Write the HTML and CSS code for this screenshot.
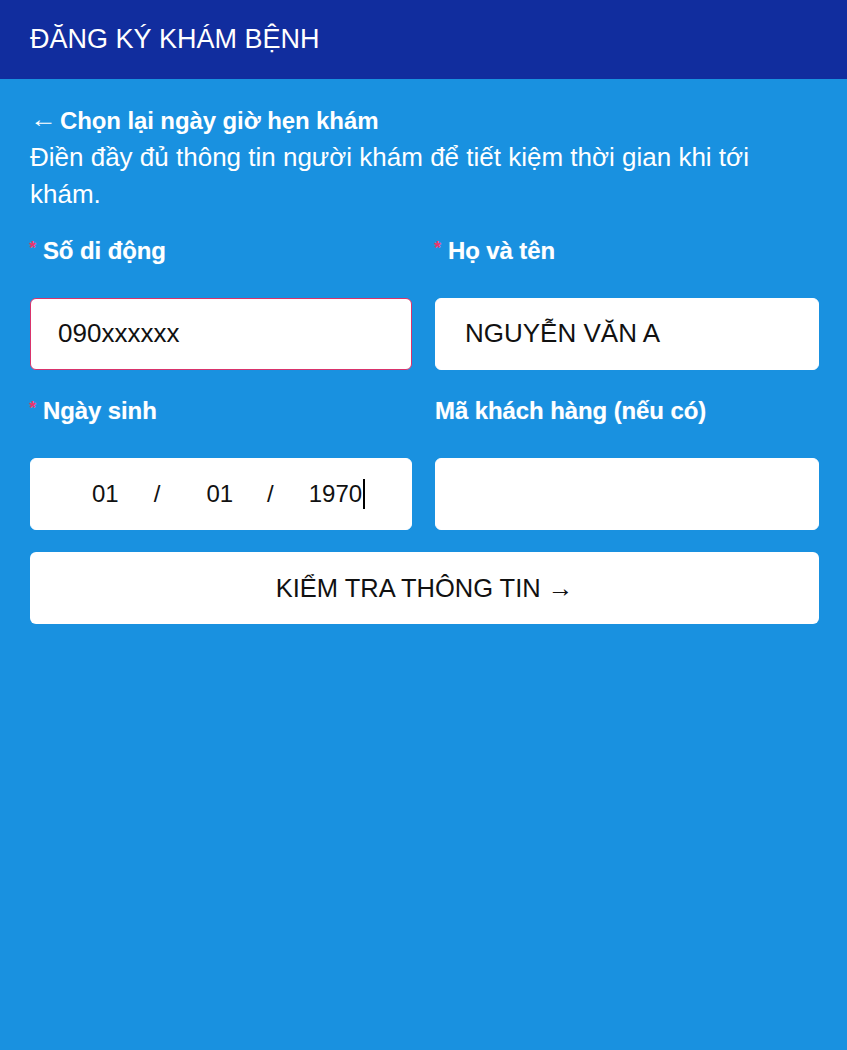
FILE: index.html
```html
<!DOCTYPE html>
<html lang="vi">
<head>
<meta charset="utf-8">
<title>Đăng ký khám bệnh</title>
<link rel="stylesheet" href="styles.css">
</head>
<body>
<header class="topbar">ĐĂNG KÝ KHÁM BỆNH</header>
<main class="content">
  <a class="back-link" href="#"><span class="back-arrow">←</span>Chọn lại ngày giờ hẹn khám</a>
  <p class="intro">Điền đầy đủ thông tin người khám để tiết kiệm thời gian khi tới khám.</p>
  <form class="form-grid">
    <div class="field">
      <label class="field-label"><span class="req">*</span>Số di động</label>
      <div class="box box-error">090xxxxxx</div>
    </div>
    <div class="field">
      <label class="field-label"><span class="req">*</span>Họ và tên</label>
      <div class="box box-name">NGUYỄN VĂN A</div>
    </div>
    <div class="field">
      <label class="field-label"><span class="req">*</span>Ngày sinh</label>
      <div class="box box-date">
        <span class="d-part">01</span><span class="d-sep sep-1">/</span><span class="d-part part-2">01</span><span class="d-sep sep-2">/</span><span class="d-year">1970</span><span class="caret"></span>
      </div>
    </div>
    <div class="field">
      <label class="field-label">Mã khách hàng (nếu có)</label>
      <div class="box"></div>
    </div>
    <button type="button" class="submit">KIỂM TRA THÔNG TIN →</button>
  </form>
</main>
</body>
</html>
```
FILE: styles.css
```css
html, body {
  margin: 0;
  padding: 0;
}
body {
  background: #1991e0;
  font-family: "Liberation Sans", Arial, sans-serif;
  color: #ffffff;
  min-height: 1050px;
}
.topbar {
  background: #112d9e;
  height: 79px;
  line-height: 78px;
  padding-left: 30px;
  font-size: 27px;
  color: #ffffff;
}
.content {
  padding: 23px 28px 0 30px;
}
.back-link {
  display: block;
  color: #ffffff;
  text-decoration: none;
  font-weight: bold;
  font-size: 24px;
  line-height: 37px;
  letter-spacing: -0.1px;
}
.back-arrow {
  display: inline-block;
  font-weight: normal;
  margin-right: 6px;
  transform: scaleX(1.12) translateY(-2px);
  transform-origin: left center;
}
.intro {
  margin: 0;
  font-size: 26px;
  line-height: 37px;
}
.form-grid {
  margin-top: 19px;
  display: grid;
  grid-template-columns: 382px 1fr;
  column-gap: 23px;
  row-gap: 22.5px;
}
.field {
  display: flex;
  flex-direction: column;
}
.field-label {
  font-weight: bold;
  font-size: 24px;
  line-height: 37px;
  height: 37px;
  margin-bottom: 28.5px;
  letter-spacing: -0.1px;
  text-shadow: 0 0 1px rgba(255,255,255,0.4);
}
.req {
  color: #e8336d;
  font-size: 18px;
  line-height: 0;
  vertical-align: 5px;
  font-weight: bold;
  margin-left: -1px;
  margin-right: 7px;
}
.box {
  height: 72px;
  box-sizing: border-box;
  background: #ffffff;
  border: 1px solid #ffffff;
  border-radius: 6px;
  padding-left: 27px;
  display: flex;
  align-items: center;
  font-size: 26px;
  color: #111111;
}
.box-name {
  padding-left: 29px;
}
.box-error {
  border: 1.5px solid #d9336b;
}
.box-date {
  padding-left: 61px;
  font-size: 24px;
}
.sep-1 {
  margin: 0 46px 0 35px;
}
.sep-2 {
  margin: 0 35px 0 34px;
}
.caret {
  display: inline-block;
  width: 2px;
  height: 30px;
  background: #000000;
  margin-left: 1px;
}
.submit {
  grid-column: 1 / span 2;
  height: 72px;
  background: #ffffff;
  border: none;
  border-radius: 6px;
  font-family: "Liberation Sans", Arial, sans-serif;
  font-size: 25.5px;
  color: #111111;
  cursor: pointer;
}
```
